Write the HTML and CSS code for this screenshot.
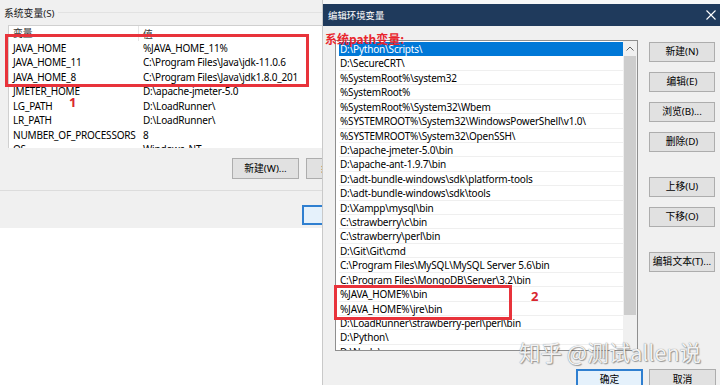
FILE: index.html
```html
<!DOCTYPE html>
<html lang="zh-CN">
<head>
<meta charset="utf-8">
<title>编辑环境变量</title>
<link rel="stylesheet" href="styles.css">
</head>
<body>
<div class="screen">
  <section class="envwin">
    <div class="envpanel">
      <div class="grouphead"><span class="grouplabel">系统变量(S)</span><span class="groupline"></span></div>
      <div class="varlist">
        <div class="vhead"><span class="c1">变量</span><span class="c2">值</span></div>
        <div class="vrow"><span class="c1">JAVA_HOME</span><span class="c2">%JAVA_HOME_11%</span></div>
        <div class="vrow"><span class="c1">JAVA_HOME_11</span><span class="c2">C:\Program Files\Java\jdk-11.0.6</span></div>
        <div class="vrow"><span class="c1">JAVA_HOME_8</span><span class="c2">C:\Program Files\Java\jdk1.8.0_201</span></div>
        <div class="vrow"><span class="c1">JMETER_HOME</span><span class="c2">D:\apache-jmeter-5.0</span></div>
        <div class="vrow"><span class="c1">LG_PATH</span><span class="c2">D:\LoadRunner\</span></div>
        <div class="vrow"><span class="c1">LR_PATH</span><span class="c2">D:\LoadRunner\</span></div>
        <div class="vrow"><span class="c1">NUMBER_OF_PROCESSORS</span><span class="c2">8</span></div>
        <div class="vrow"><span class="c1">OS</span><span class="c2">Windows_NT</span></div>
      </div>
      <div class="btnrow">
        <button class="btn">新建(W)...</button>
        <button class="btn">编辑(I)...</button>
      </div>
      <div class="sep"></div>
      <div class="btnrow2">
        <button class="btn btn-default">确定</button>
      </div>
    </div>
  </section>

  <section class="dialog">
    <div class="topstrip"></div>
    <header class="titlebar">
      <span class="title">编辑环境变量</span>
      <svg class="close" width="10" height="10" viewBox="0 0 10 10"><path d="M0.5 0.5 L9.5 9.5 M9.5 0.5 L0.5 9.5" stroke="#ffffff" stroke-width="1.1" fill="none"/></svg>
    </header>
    <div class="dbody">
      <div class="pathlist">
        <div class="rows">
          <div class="prow selected">D:\Python\Scripts\</div>
          <div class="prow">D:\SecureCRT\</div>
          <div class="prow">%SystemRoot%\system32</div>
          <div class="prow">%SystemRoot%</div>
          <div class="prow">%SystemRoot%\System32\Wbem</div>
          <div class="prow">%SYSTEMROOT%\System32\WindowsPowerShell\v1.0\</div>
          <div class="prow">%SYSTEMROOT%\System32\OpenSSH\</div>
          <div class="prow">D:\apache-jmeter-5.0\bin</div>
          <div class="prow">D:\apache-ant-1.9.7\bin</div>
          <div class="prow">D:\adt-bundle-windows\sdk\platform-tools</div>
          <div class="prow">D:\adt-bundle-windows\sdk\tools</div>
          <div class="prow">D:\Xampp\mysql\bin</div>
          <div class="prow">C:\strawberry\c\bin</div>
          <div class="prow">C:\strawberry\perl\bin</div>
          <div class="prow">D:\Git\Git\cmd</div>
          <div class="prow">C:\Program Files\MySQL\MySQL Server 5.6\bin</div>
          <div class="prow">C:\Program Files\MongoDB\Server\3.2\bin</div>
          <div class="prow">%JAVA_HOME%\bin</div>
          <div class="prow">%JAVA_HOME%\jre\bin</div>
          <div class="prow">D:\LoadRunner\strawberry-perl\perl\bin</div>
          <div class="prow">D:\Python\</div>
          <div class="prow">D:\Node\</div>
        </div>
        <div class="scrollbar">
          <div class="sb-arrow"><svg width="8" height="5" viewBox="0 0 8 5"><path d="M0.5 4.5 L4 1 L7.5 4.5" stroke="#606060" stroke-width="1" fill="none"/></svg></div>
          <div class="sb-thumb"></div>
        </div>
      </div>
      <div class="side">
        <button class="btn">新建(N)</button>
        <button class="btn">编辑(E)</button>
        <button class="btn">浏览(B)...</button>
        <button class="btn">删除(D)</button>
        <button class="btn gap-before">上移(U)</button>
        <button class="btn">下移(O)</button>
        <button class="btn gap-before">编辑文本(T)...</button>
      </div>
    </div>
    <div class="footer">
      <button class="btn btn-default">确定</button>
      <button class="btn">取消</button>
    </div>
  </section>

  <div class="annot-box annot-box1"></div>
  <div class="annot-num annot-num1">1</div>
  <div class="annot-title">系统path变量:</div>
  <div class="annot-box annot-box2"></div>
  <div class="annot-num annot-num2">2</div>
  <div class="watermark">知乎 @测试allen说</div>
</div>
</body>
</html>
```

FILE: styles.css
```css
html, body {
  margin: 0;
  padding: 0;
  background: #ffffff;
}

body {
  font-family: "Noto Sans", "Noto Sans CJK SC", sans-serif;
  font-size: 9.8px;
  color: #000000;
}

.screen {
  width: 720px;
  height: 385px;
  display: flex;
  position: relative;
  overflow: hidden;
  background: #ffffff;
}

/* ---------- left window ---------- */
.envwin {
  width: 322px;
  flex: none;
  overflow: hidden;
  background: #ffffff;
}

.envpanel {
  width: 420px;
  height: 228px;
  background: #f0f0f0;
  display: flex;
  flex-direction: column;
}

.envpanel > * {
  flex: none;
}

.grouphead {
  height: 25px;
  display: flex;
  align-items: center;
  gap: 4px;
  padding-left: 4px;
  box-sizing: border-box;
}

.grouplabel {
  color: #1a1a1a;
}

.groupline {
  flex: 1;
  height: 1px;
  background: #e2e2e2;
}

.varlist {
  margin-left: 8px;
  height: 123px;
  background: #ffffff;
  border-top: 1px solid #d0d0d0;
  border-left: 1px solid #d0d0d0;
  box-sizing: border-box;
  overflow: hidden;
}

.vhead {
  height: 15px;
  display: flex;
  align-items: center;
  color: #333333;
}

.vhead .c1 {
  border-right: 1px solid #e5e5e5;
  height: 15px;
  line-height: 15px;
  box-sizing: border-box;
}

.vrow {
  height: 14.45px;
  line-height: 14.45px;
  display: flex;
  white-space: nowrap;
  font-size: 10px;
  letter-spacing: -0.2px;
}

.c1 {
  width: 130px;
  padding-left: 4px;
  box-sizing: border-box;
  flex: none;
}

.c2 {
  padding-left: 4px;
  flex: none;
}

.btnrow {
  margin-top: 10px;
  padding-left: 232px;
  display: flex;
  gap: 7px;
}

.btnrow .btn {
  width: 67px;
  height: 21px;
}

.sep {
  margin-top: 11px;
  height: 1px;
  background: #dcdcdc;
}

.btnrow2 {
  margin-top: 14px;
  padding-left: 302px;
  display: flex;
}

.btnrow2 .btn {
  width: 67px;
  height: 20px;
}

/* ---------- buttons ---------- */
.btn {
  font-family: "Noto Sans", "Noto Sans CJK SC", sans-serif;
  font-size: 9.8px;
  color: #000000;
  background: #e1e1e1;
  border: 1px solid #adadad;
  padding: 0;
  margin: 0;
  width: 66px;
  height: 20px;
  box-sizing: border-box;
  line-height: 1;
  white-space: nowrap;
  flex: none;
}

.btn-default {
  border: 2px solid #2f7fd0;
  background: #e5f1fb;
}

/* ---------- right dialog ---------- */
.dialog {
  flex: 1;
  display: flex;
  flex-direction: column;
  background: #f0f0f0;
  border-left: 1px solid #c9c9c9;
}

.dialog > * {
  flex: none;
}

.topstrip {
  height: 4px;
  background: #f7f7f7;
}

.titlebar {
  height: 22px;
  background: #1f3a5c;
  color: #ffffff;
  display: flex;
  align-items: center;
  justify-content: space-between;
  padding: 0 4px 0 5px;
}

.title {
  font-size: 9.4px;
}

.dbody {
  display: flex;
  padding: 14px 0 0 12px;
  gap: 11px;
}

.pathlist {
  width: 303px;
  height: 311px;
  border: 1px solid #8f8f8f;
  box-sizing: border-box;
  background: #ffffff;
  display: flex;
  flex: none;
}

.rows {
  flex: 1;
  overflow: hidden;
  padding: 1px 0 0 3px;
}

.prow {
  height: 14.43px;
  line-height: 14px;
  padding-left: 1px;
  border-bottom: 1px solid #efefef;
  box-sizing: border-box;
  white-space: nowrap;
  font-size: 10px;
  letter-spacing: -0.2px;
}

.prow.selected {
  background: #0078d7;
  color: #ffffff;
  border-bottom-color: #0078d7;
}

.scrollbar {
  width: 14px;
  flex: none;
  background: #f0f0f0;
  display: flex;
  flex-direction: column;
}

.sb-arrow {
  height: 15px;
  display: flex;
  align-items: center;
  justify-content: center;
}

.sb-thumb {
  height: 259px;
  margin: 0 1px;
  background: #cdcdcd;
}

.side {
  display: flex;
  flex-direction: column;
  gap: 10px;
  padding-top: 2px;
}

.side .gap-before {
  margin-top: 15px;
}

.footer {
  margin-top: 18px;
  display: flex;
  justify-content: flex-end;
  gap: 6px;
  padding-right: 4px;
}

.footer .btn {
  width: 67px;
  height: 22px;
}

/* ---------- annotations (overlays) ---------- */
.annot-box {
  position: absolute;
  border: 3px solid #e8333b;
  box-sizing: border-box;
}

.annot-box1 {
  left: 5px;
  top: 34px;
  width: 304px;
  height: 53px;
}

.annot-box2 {
  left: 334px;
  top: 285px;
  width: 178px;
  height: 35px;
}

.annot-num {
  position: absolute;
  color: #d9262e;
  font-weight: bold;
  font-size: 13px;
  line-height: 1;
  font-family: "Noto Sans", sans-serif;
}

.annot-num1 {
  left: 69px;
  top: 96px;
}

.annot-num2 {
  left: 531px;
  top: 290px;
}

.annot-title {
  position: absolute;
  left: 325px;
  top: 33px;
  color: #e8262e;
  font-weight: bold;
  font-size: 12px;
  line-height: 1;
  font-family: "Noto Sans CJK SC", sans-serif;
}

.watermark {
  position: absolute;
  left: 519px;
  top: 339px;
  font-family: "Noto Sans CJK SC", sans-serif;
  font-size: 21.5px;
  line-height: 1.2;
  color: rgba(255, 255, 255, 0.92);
  text-shadow: 0 0 1px #6f6f6f, 1px 1px 1px rgba(0, 0, 0, 0.35);
  white-space: nowrap;
}
```
